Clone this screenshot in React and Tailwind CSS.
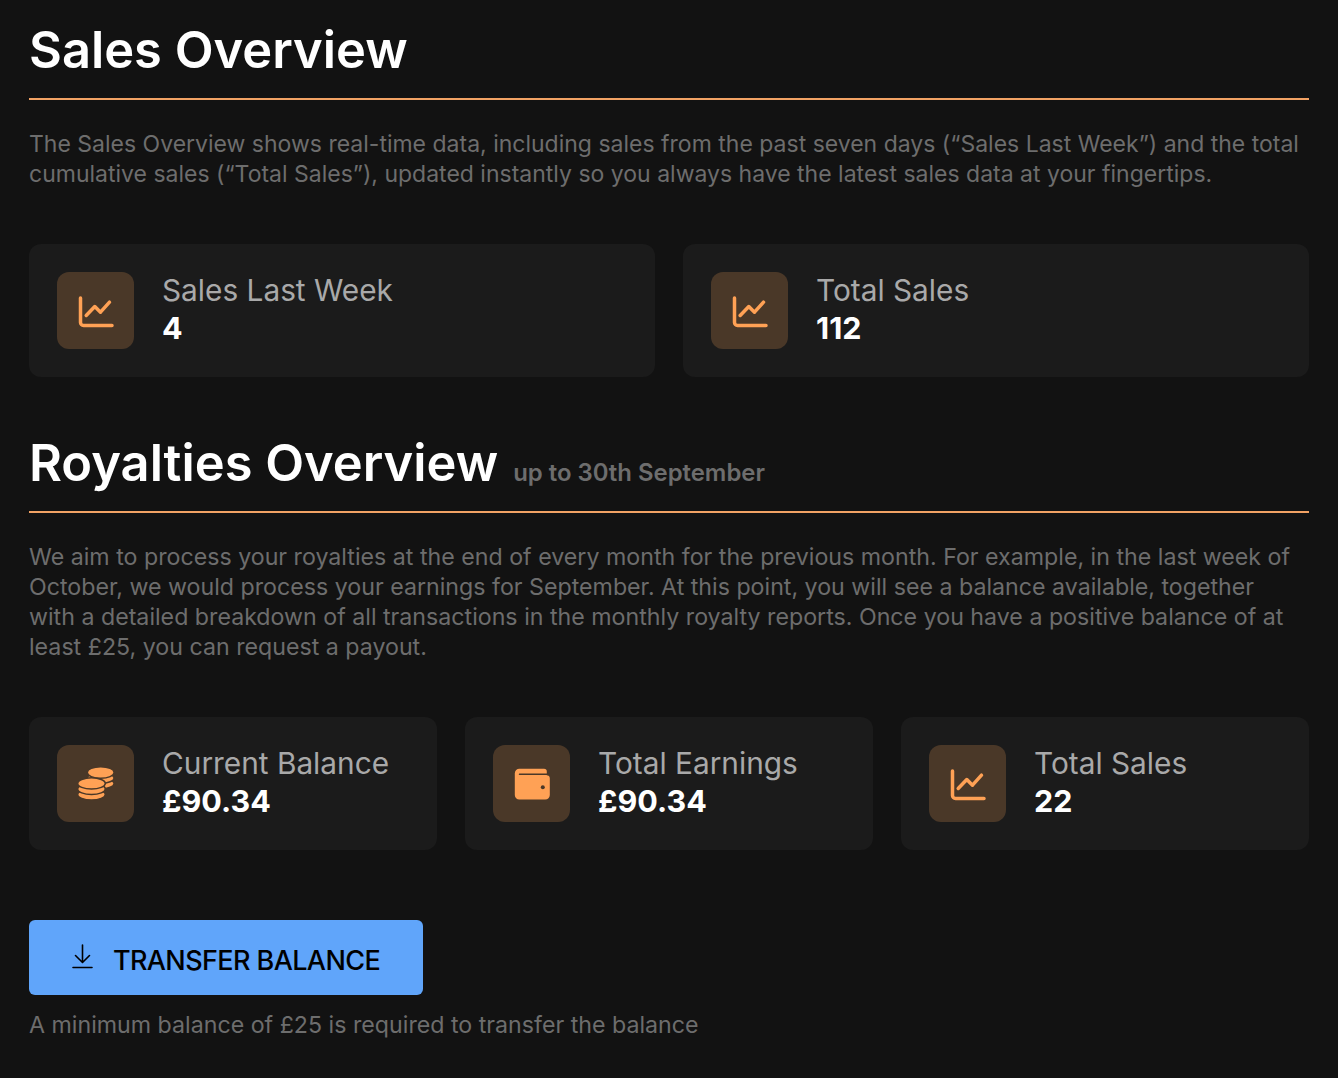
import React from "react";

const font = "font-['Inter','Noto_Sans',sans-serif]";
const orange = "#ffa155";
const tile = "#4a3828";

function ChartIcon() {
  return (
    <svg width="36" height="36" viewBox="0 0 36 36" fill="none" stroke={orange} strokeWidth="3.5" strokeLinecap="round" strokeLinejoin="round">
      <path d="M2.5 5V29.5a3 3 0 0 0 3 3H34" />
      <path d="M8.2 22.5l8.600-9 5.700 5.700 9-10" />
    </svg>
  );
}

function CoinsIcon() {
  const discs = [
    [22.7, 17.5, 13.4, 5.4],
    [22.7, 12, 13.4, 5.4],
    [22.7, 6.5, 13.4, 5.8],
    [13.5, 28.4, 13.8, 5.6],
    [13.5, 22.9, 13.8, 5.6],
    [13.5, 17.4, 13.8, 5.6],
  ];
  return (
    <svg width="36" height="36" viewBox="0 0 36 36" fill={orange} stroke={tile} strokeWidth="1.5">
      {discs.map(([cx, cy, rx, ry], i) => (
        <ellipse key={i} cx={cx} cy={cy} rx={rx} ry={ry} />
      ))}
    </svg>
  );
}

function WalletIcon() {
  return (
    <svg width="36" height="36" viewBox="0 0 36 36">
      <path fill={orange} d="M5.500 2.800H30a2.800 2.800 0 0 1 2.800 2.800V9.300h-.3a3.300 3.300 0 0 1 3.300 3.300V29a4.500 4.500 0 0 1-4.500 4.500H5.300A4.500 4.500 0 0 1 .8 29V7.300a4.500 4.500 0 0 1 4.700-4.500z" />
      <path d="M5.500 8.200H36" stroke={tile} strokeWidth="1.5" strokeLinecap="round" />
      <circle cx="28.800" cy="21.200" r="2" fill={tile} />
    </svg>
  );
}

function DownloadIcon() {
  return (
    <svg className="mb-[11px]" width="21" height="25" viewBox="0 0 21 25" fill="none" stroke="#000" strokeWidth="1.6" strokeLinecap="round" strokeLinejoin="round">
      <path d="M10.500 1v17M3.500 11.500l7 7 7-7M1 23.500h19" />
    </svg>
  );
}

function StatCard({ icon, label, value }) {
  return (
    <div className="flex items-center gap-[28px] rounded-xl bg-[#1b1b1b] p-7">
      <div className="flex h-[77px] w-[77px] items-center justify-center rounded-xl bg-[#4a3828]">{icon}</div>
      <div className="-mt-1">
        <p className="text-[29.8px] leading-[38px] text-[#a9a9a9]">{label}</p>
        <p className="text-[30.5px] leading-[38px] font-bold text-white">{value}</p>
      </div>
    </div>
  );
}

function Heading({ children, note }) {
  return (
    <div className="flex items-baseline gap-[15px] border-b-2 border-[#f2a264] pb-[12px]">
      <h2 className="text-[50.6px] leading-[73px] font-semibold text-white">{children}</h2>
      {note && <span className="text-[23.9px] font-semibold text-[#6d6d6d]">{note}</span>}
    </div>
  );
}

export default function App() {
  return (
    <div className={`min-h-[1078px] bg-[#121212] px-[29px] pt-[13px] ${font}`}>
      <Heading>Sales Overview</Heading>
      <p className="mt-[29px] text-[23px] leading-[30px] text-[#6d6d6d]">
        The Sales Overview shows real-time data, including sales from the past seven days (“Sales Last Week”) and the total
        <br />
        cumulative sales (“Total Sales”), updated instantly so you always have the latest sales data at your fingertips.
      </p>
      <div className="mt-[55px] grid grid-cols-2 gap-7">
        <StatCard icon={<ChartIcon />} label="Sales Last Week" value="4" />
        <StatCard icon={<ChartIcon />} label="Total Sales" value="112" />
      </div>

      <div className="mt-[49px]">
        <Heading note="up to 30th September">Royalties Overview</Heading>
      </div>
      <p className="mt-[29px] text-[23.2px] leading-[30px] text-[#6d6d6d]">
        We aim to process your royalties at the end of every month for the previous month. For example, in the last week of
        <br />
        October, we would process your earnings for September. At this point, you will see a balance available, together
        <br />
        with a detailed breakdown of all transactions in the monthly royalty reports. Once you have a positive balance of at
        <br />
        least £25, you can request a payout.
      </p>
      <div className="mt-[55px] grid grid-cols-3 gap-7">
        <StatCard icon={<CoinsIcon />} label="Current Balance" value="£90.34" />
        <StatCard icon={<WalletIcon />} label="Total Earnings" value="£90.34" />
        <StatCard icon={<ChartIcon />} label="Total Sales" value="22" />
      </div>

      <button className="mt-[70px] flex h-[75px] w-[394px] items-center justify-center gap-[20px] rounded-md bg-[#60a5fa] pt-2 text-[27px] font-medium tracking-[-0.6px] text-black">
        <DownloadIcon />
        TRANSFER BALANCE
      </button>
      <p className="mt-[15px] text-[23.2px] leading-[30px] text-[#6d6d6d]">
        A minimum balance of £25 is required to transfer the balance
      </p>
    </div>
  );
}
